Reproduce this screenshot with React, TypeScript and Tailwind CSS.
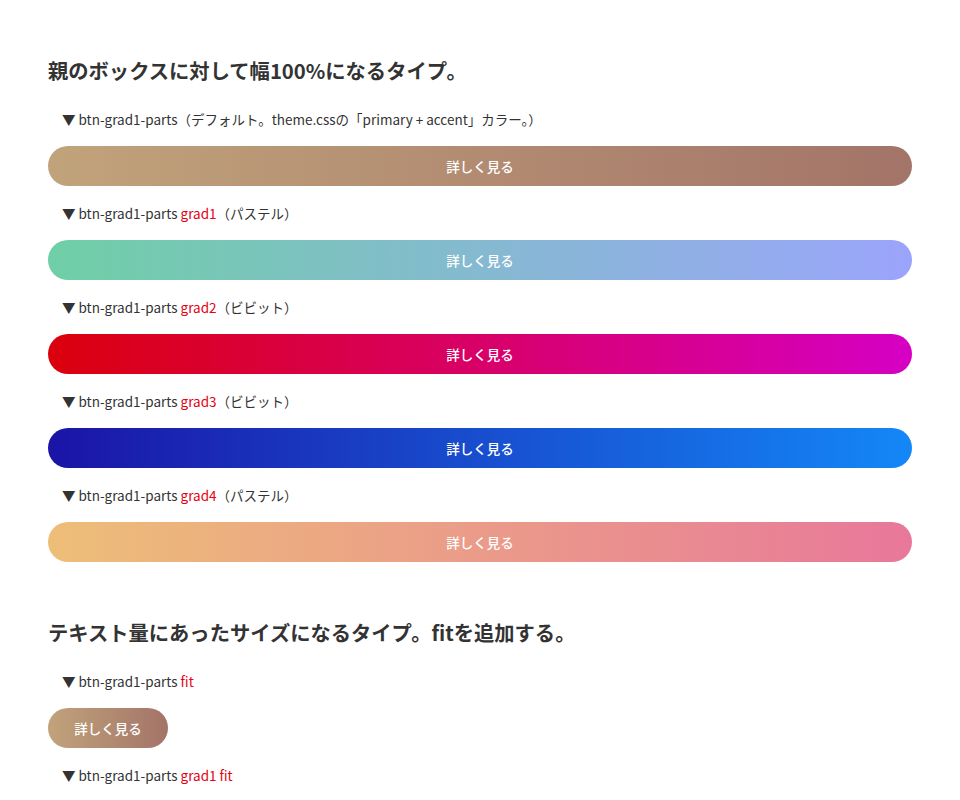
import React from "react";

const sans = "font-['Noto_Sans_CJK_JP','Noto_Sans',sans-serif]";

const fullButtons = [
	{
		tag: "",
		note: "（デフォルト。theme.cssの「primary + accent」カラー。）",
		grad: "bg-linear-to-r/srgb from-[#c1a37b] to-[#a37468]",
	},
	{ tag: "grad1", note: "（パステル）", grad: "bg-linear-to-r/srgb from-[#6fcfa6] to-[#9ba4fb]" },
	{ tag: "grad2", note: "（ビビット）", grad: "bg-linear-to-r/srgb from-[#db000c] to-[#d500c4]" },
	{ tag: "grad3", note: "（ビビット）", grad: "bg-linear-to-r/srgb from-[#1b14a6] to-[#1487f7]" },
	{ tag: "grad4", note: "（パステル）", grad: "bg-linear-to-r/srgb from-[#edbe78] to-[#e8789a]" },
];

const Label = ({ tag, note }: { tag: string; note?: string }) => (
	<p className="my-[15px] pl-[14px] text-[13.5px] leading-[24px] text-[#333]">
		▼ btn-grad1-parts{tag && <span className="text-[#e60012]"> {tag}</span>}
		{note}
	</p>
);

const App = () => {
	return (
		<div className={`${sans} min-h-[800px] bg-white px-12 pt-[55px] text-[#333]`}>
			<h2 className="mb-[22px] text-[20.3px] leading-[30px] font-bold">
				親のボックスに対して幅100%になるタイプ。
			</h2>
			{fullButtons.map((b) => (
				<div key={b.tag || "default"}>
					<Label tag={b.tag} note={b.note} />
					<a
						href="#"
						className={`flex h-10 w-full items-center justify-center rounded-full text-[13.5px] font-medium text-white ${b.grad}`}
					>
						詳しく見る
					</a>
				</div>
			))}

			<h2 className="mt-[55px] mb-[22px] text-[20.3px] leading-[30px] font-bold">
				テキスト量にあったサイズになるタイプ。fitを追加する。
			</h2>
			<Label tag="fit" />
			<a
				href="#"
				className="flex h-10 w-[120px] items-center justify-center rounded-full bg-linear-to-r/srgb from-[#c1a37b] to-[#a37468] text-[13.5px] font-medium text-white"
			>
				詳しく見る
			</a>
			<Label tag="grad1 fit" />
		</div>
	);
};

export default App;
